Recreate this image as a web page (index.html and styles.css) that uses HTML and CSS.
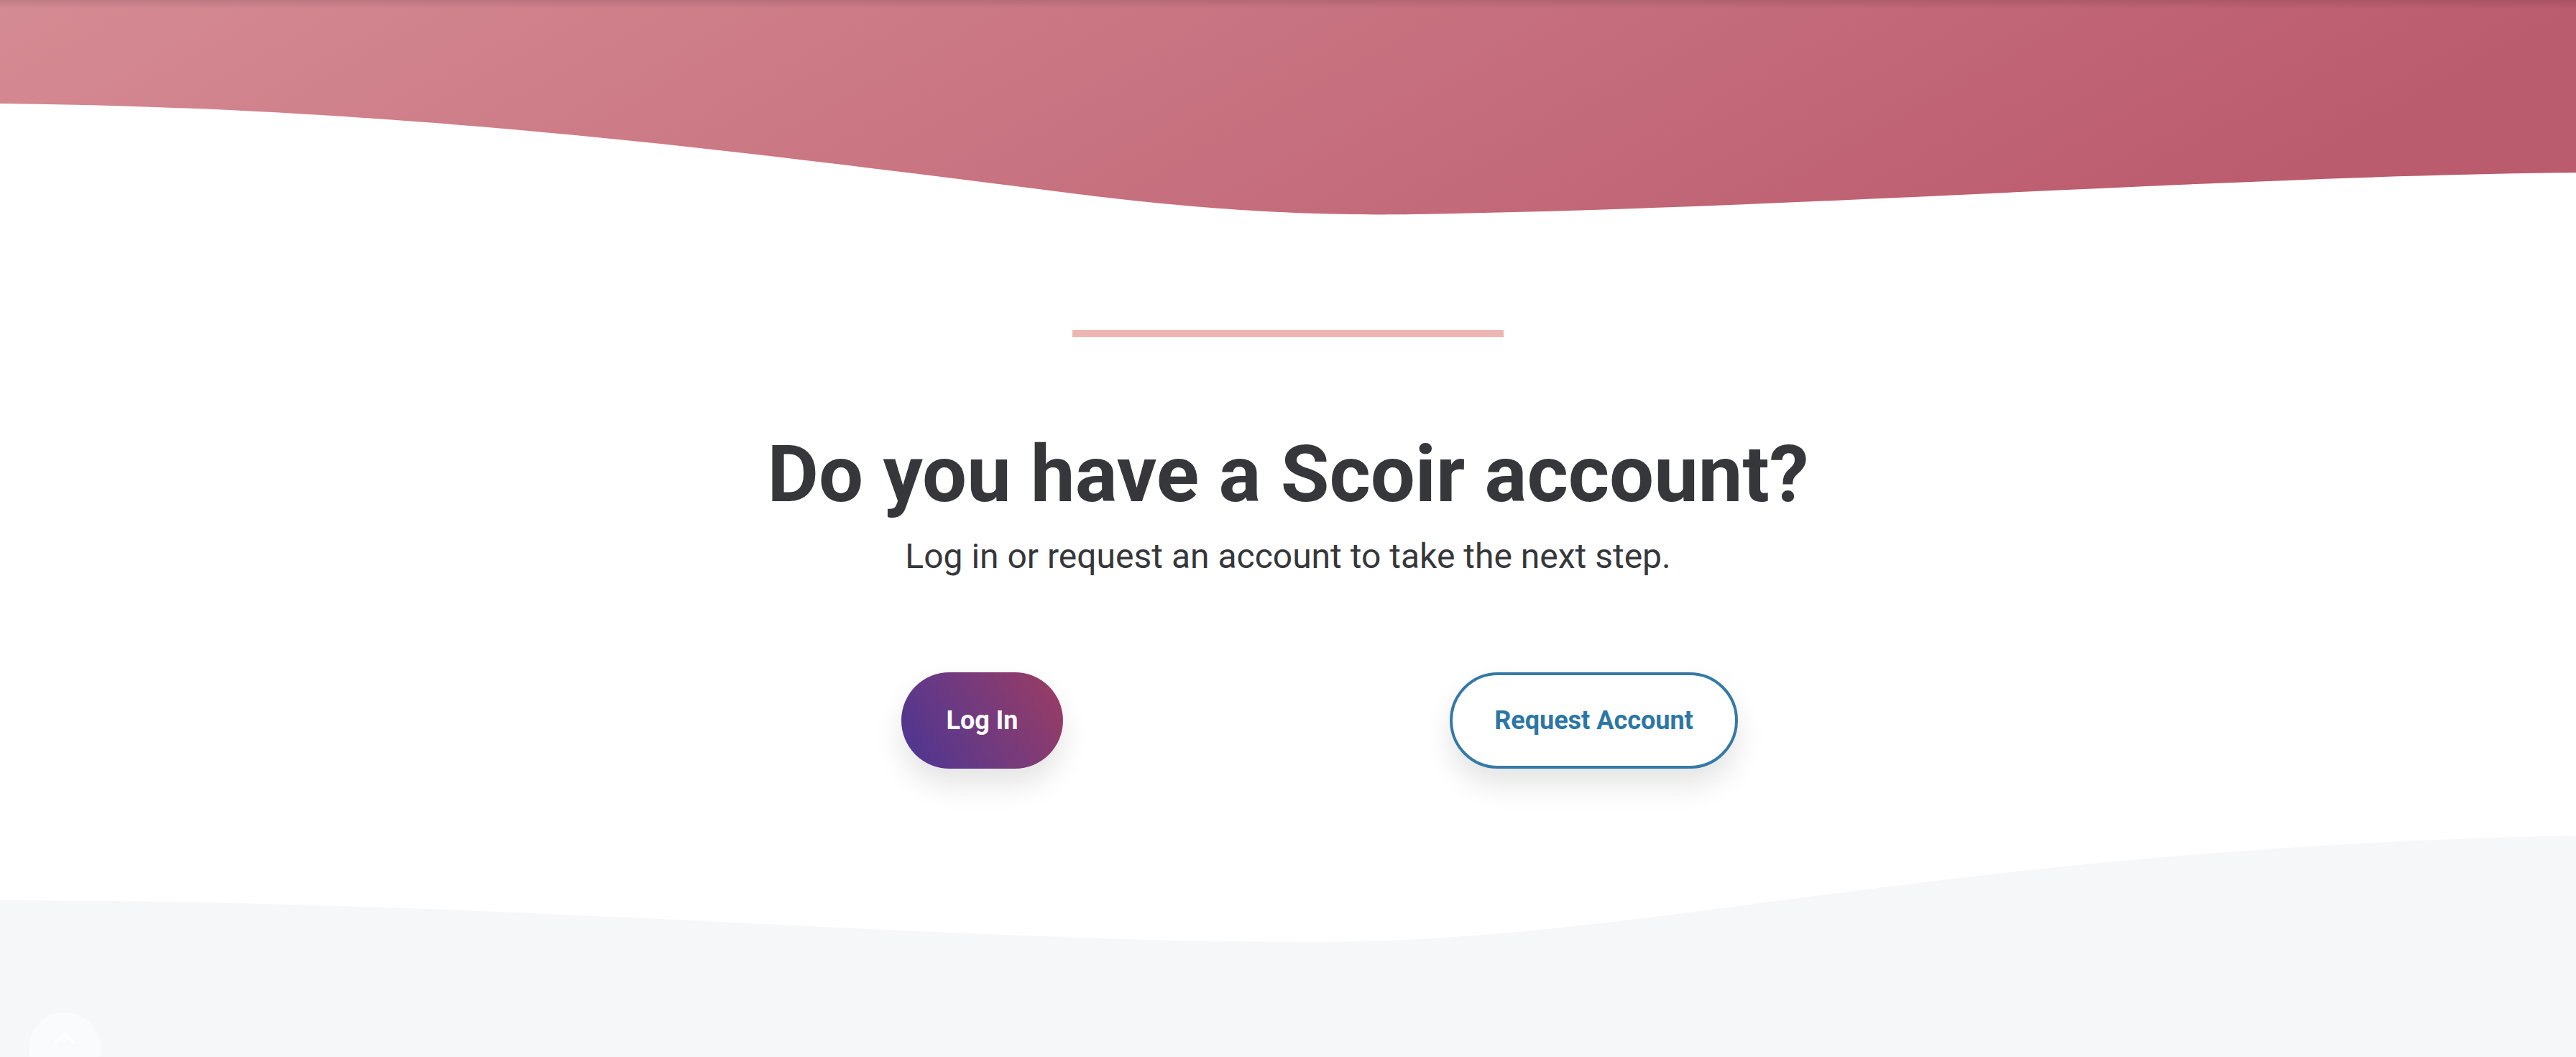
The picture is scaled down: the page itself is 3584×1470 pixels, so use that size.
FILE: index.html
```html
<!DOCTYPE html>
<html lang="en">
<head>
<meta charset="utf-8">
<title>Do you have a Scoir account?</title>
<link rel="stylesheet" href="styles.css">
</head>
<body>
<header class="top-wave">
  <svg class="wave-svg" viewBox="0 0 3584 300" preserveAspectRatio="none" aria-hidden="true">
    <defs>
      <linearGradient id="pink" x1="0" y1="0" x2="1" y2="0.15">
        <stop offset="0" stop-color="#d58b93"/>
        <stop offset="1" stop-color="#bb5b6e"/>
      </linearGradient>
      <linearGradient id="shade" x1="0" y1="0" x2="0" y2="1">
        <stop offset="0" stop-color="#000" stop-opacity="0.11"/>
        <stop offset="1" stop-color="#000" stop-opacity="0"/>
      </linearGradient>
    </defs>
    <path d="M0,0 H3584 V240 C3100,245 2500,290 1966,298 C1850,300 1700,295 1500,270 C1100,220 600,150 0,144 Z" fill="url(#pink)"/>
    <rect x="0" y="0" width="3584" height="12" fill="url(#shade)"/>
  </svg>
</header>

<main class="cta">
  <div class="divider"></div>
  <h1 class="cta-title">Do you have a Scoir account?</h1>
  <p class="cta-sub">Log in or request an account to take the next step.</p>
  <div class="cta-actions">
    <a class="btn btn-primary" href="#">Log In</a>
    <a class="btn btn-outline" href="#">Request Account</a>
  </div>
</main>

<footer class="bottom">
  <svg class="bottom-svg" viewBox="0 0 3584 310" preserveAspectRatio="none" aria-hidden="true">
    <path d="M0,92 C700,92 1300,150 1829,150 C2300,150 2700,20 3584,2 V310 H0 Z" fill="#f6f7f9"/>
  </svg>
  <div class="bottom-fill"></div>
</footer>

<a class="to-top" href="#" aria-label="Back to top">
  <svg viewBox="0 0 40 24" width="32" height="20" aria-hidden="true">
    <path d="M5,19 L20,5 L35,19" fill="none" stroke="#ffffff" stroke-width="6" stroke-linecap="round" stroke-linejoin="round"/>
  </svg>
</a>
</body>
</html>
```

FILE: styles.css
```css
html, body {
  margin: 0;
  padding: 0;
}

body {
  background: #ffffff;
  font-family: Roboto, "Liberation Sans", Arial, sans-serif;
  color: #36373b;
  overflow: hidden;
}

.top-wave {
  display: block;
}

.wave-svg {
  display: block;
  width: 100%;
  height: 300px;
}

.cta {
  display: flex;
  flex-direction: column;
  align-items: center;
  padding-top: 159px;
}

.divider {
  width: 600px;
  height: 10px;
  background: #eeb6b2;
}

.cta-title {
  margin: 125px 0 0;
  font-size: 110px;
  line-height: 1.2;
  font-weight: 700;
  color: #36373b;
  letter-spacing: 0;
}

.cta-sub {
  margin: 12px 0 0;
  font-size: 48px;
  line-height: 1.5;
  font-weight: 400;
  color: #36373b;
}

.cta-actions {
  display: grid;
  grid-template-columns: 851px 851px;
  justify-items: center;
  margin-top: 125px;
}

.btn {
  box-sizing: border-box;
  display: flex;
  align-items: center;
  justify-content: center;
  height: 134px;
  padding: 0 62px;
  border-radius: 67px;
  font-size: 36px;
  font-weight: 700;
  text-decoration: none;
  box-shadow: 0 22px 40px rgba(0, 0, 0, 0.11);
}

.btn-primary {
  color: #ffffff;
  background: linear-gradient(60deg, #4a3594 0%, #6f3a80 45%, #9d3d62 100%);
}

.btn-outline {
  color: #2c76a5;
  background: #ffffff;
  border: 4px solid #3579a6;
  padding: 0 58px;
}

.bottom {
  display: block;
  margin-top: 91px;
}

.bottom-svg {
  display: block;
  width: 100%;
  height: 310px;
}

.bottom-fill {
  height: 200px;
  background: #f6f7f9;
}

.to-top {
  position: fixed;
  left: 40px;
  bottom: -38px;
  width: 100px;
  height: 100px;
  border-radius: 50%;
  background: #fafbfd;
  display: flex;
  justify-content: center;
  padding-top: 26px;
  box-sizing: border-box;
}
```
